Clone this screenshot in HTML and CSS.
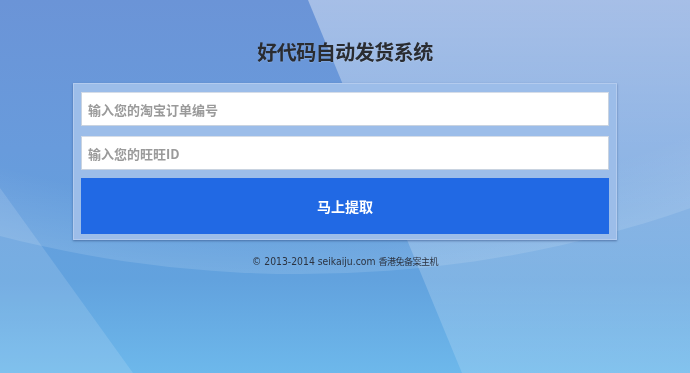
FILE: index.html
```html
<!DOCTYPE html>
<html lang="zh-CN">
<head>
<meta charset="utf-8">
<title>好代码自动发货系统</title>
<link rel="stylesheet" href="styles.css">
</head>
<body>
<svg class="bg" viewBox="0 0 690 373" preserveAspectRatio="none" aria-hidden="true">
  <defs>
    <linearGradient id="base" x1="0" y1="0" x2="0" y2="1">
      <stop offset="0" stop-color="#6b94d7"/>
      <stop offset="0.4" stop-color="#689bdc"/>
      <stop offset="0.75" stop-color="#62a2de"/>
      <stop offset="1" stop-color="#6db8eb"/>
    </linearGradient>
    <linearGradient id="rightLight" x1="0" y1="0" x2="0" y2="1">
      <stop offset="0" stop-color="#fff" stop-opacity="0.4"/>
      <stop offset="0.55" stop-color="#fff" stop-opacity="0.22"/>
      <stop offset="1" stop-color="#fff" stop-opacity="0.15"/>
    </linearGradient>
    <radialGradient id="band" gradientUnits="userSpaceOnUse" cx="300" cy="-392" r="900" gradientTransform="translate(300 -392) scale(1 0.74) translate(-300 392)">
      <stop offset="0.9" stop-color="#fff" stop-opacity="0"/>
      <stop offset="1" stop-color="#fff" stop-opacity="0.12"/>
    </radialGradient>
  </defs>
  <rect x="0" y="0" width="690" height="373" fill="url(#base)"/>
  <polygon points="0,188 133,373 0,373" fill="#fff" fill-opacity="0.13"/>
  <polygon points="308,0 690,0 690,373 462,373" fill="url(#rightLight)"/>
  <ellipse cx="300" cy="-392" rx="900" ry="666" fill="url(#band)"/>
</svg>

<main class="page">
  <h1 class="title">好代码自动发货系统</h1>
  <form class="card">
    <input class="field" type="text" placeholder="输入您的淘宝订单编号">
    <input class="field" type="text" placeholder="输入您的旺旺ID">
    <button class="submit" type="button">马上提取</button>
  </form>
  <p class="footer">© 2013-2014 seikaiju.com <span class="cjk">香港免备案主机</span></p>
</main>
</body>
</html>
```
FILE: styles.css
```css
html, body {
  margin: 0;
  padding: 0;
  width: 100%;
  height: 100%;
  overflow: hidden;
}

body {
  font-family: "Noto Sans CJK SC", "Liberation Sans", sans-serif;
  background: #6aa0de;
}

.bg {
  position: fixed;
  top: 0;
  left: 0;
  width: 100%;
  height: 100%;
  z-index: -1;
  display: block;
}

.page {
  width: 544px;
  margin: 0 auto;
  display: flex;
  flex-direction: column;
  align-items: stretch;
}

.title {
  margin: 38px 0 17px;
  height: 28px;
  line-height: 28px;
  text-align: center;
  font-size: 20px;
  font-weight: 700;
  color: #2a2c31;
  letter-spacing: -0.5px;
  text-shadow: 0 1px 1px rgba(255, 255, 255, 0.15);
}

.card {
  margin: 0;
  box-sizing: border-box;
  height: 157px;
  padding: 8px 7px 5px;
  border: 1px solid #b3cbee;
  background: #9cbde9;
  box-shadow: 0 1px 2px rgba(40, 70, 120, 0.55);
  display: flex;
  flex-direction: column;
  gap: 10px;
}

.field {
  box-sizing: border-box;
  height: 34px;
  margin: 0;
  padding: 0 6px;
  border: 1px solid #c9d3e0;
  border-top-color: #d6dde8;
  background: #fff;
  font-family: "Noto Sans CJK SC", "Liberation Sans", sans-serif;
  font-size: 13px;
  font-weight: 700;
  color: #444;
  outline: none;
}

.field::placeholder {
  color: #9a9a9a;
}

.submit {
  box-sizing: border-box;
  height: 56px;
  margin: -2px 0 0;
  border: 0;
  background: #2169e4;
  color: #fff;
  font-family: "Noto Sans CJK SC", sans-serif;
  font-size: 14px;
  font-weight: 700;
  cursor: pointer;
}

.footer {
  margin: 13px 0 0;
  line-height: 16px;
  text-align: center;
  font-family: "DejaVu Sans Condensed", "Liberation Sans", "Noto Sans CJK SC", sans-serif;
  font-size: 10.3px;
  color: #2c3340;
}

.footer .cjk {
  font-family: "Noto Sans CJK SC", sans-serif;
  font-size: 9px;
  letter-spacing: -0.5px;
}
```
